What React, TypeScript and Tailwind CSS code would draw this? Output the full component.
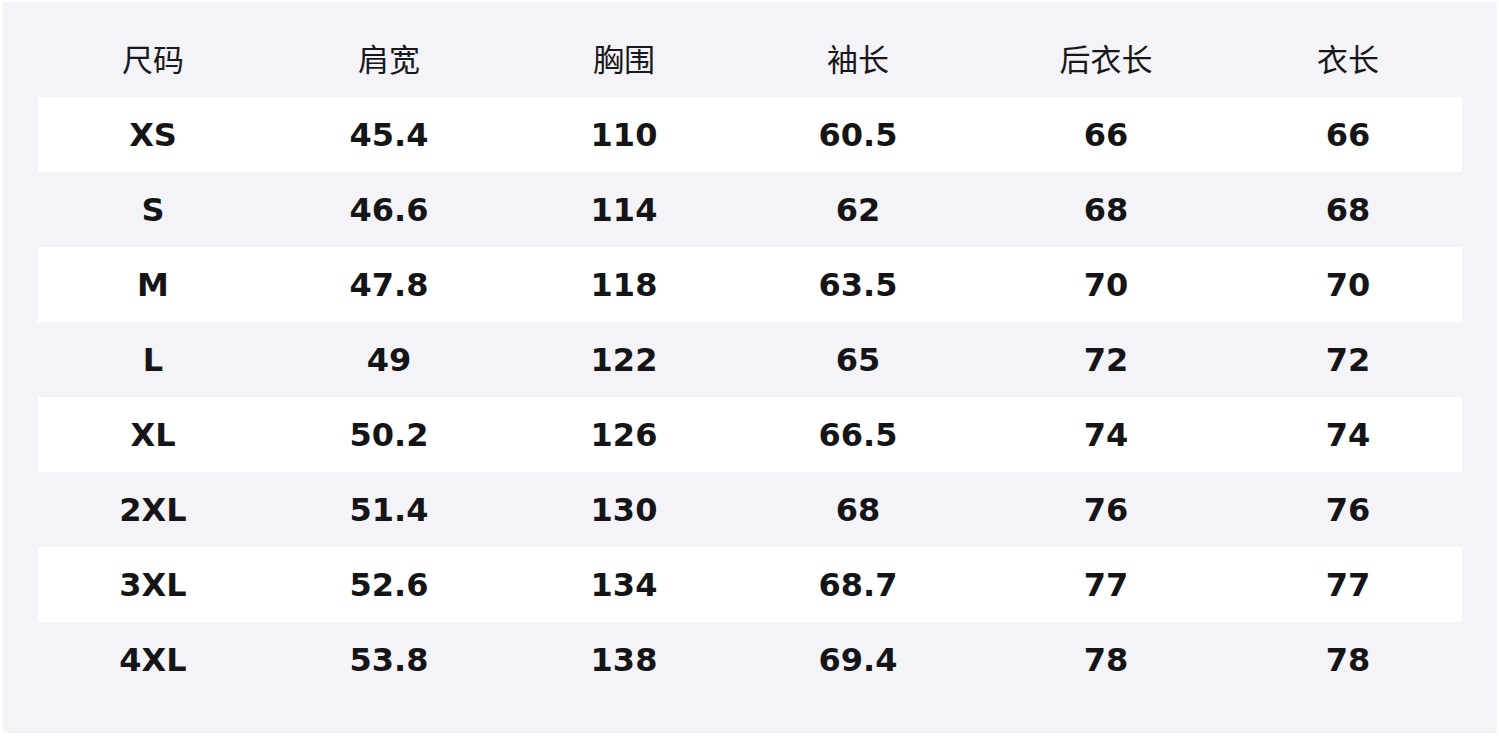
import React from "react";

const headers = ["尺码", "肩宽", "胸围", "袖长", "后衣长", "衣长"];
const rows = [
  ["XS", "45.4", "110", "60.5", "66", "66"],
  ["S", "46.6", "114", "62", "68", "68"],
  ["M", "47.8", "118", "63.5", "70", "70"],
  ["L", "49", "122", "65", "72", "72"],
  ["XL", "50.2", "126", "66.5", "74", "74"],
  ["2XL", "51.4", "130", "68", "76", "76"],
  ["3XL", "52.6", "134", "68.7", "77", "77"],
  ["4XL", "53.8", "138", "69.4", "78", "78"],
];

const cols = "grid grid-cols-[230px_242px_228px_240px_256px_228px]";

export default function App() {
  return (
    <div className="w-[1500px] h-[736px] bg-white pt-[2px] px-[3px]">
      <div className="w-[1494px] h-[731px] bg-[#f3f3f8] rounded-[3px] pt-[20px] px-[35px]">
        <div className={`${cols} h-[75px] items-center pb-[4px] text-[#18181a] text-[31px] font-normal [font-family:'Noto_Sans_CJK_SC',sans-serif]`}>
          {headers.map((h) => (
            <div key={h} className="text-center leading-none">{h}</div>
          ))}
        </div>
        {rows.map((r, i) => (
          <div
            key={r[0]}
            className={`${cols} h-[75px] items-center ${i % 2 === 0 ? "bg-white" : "bg-transparent"} text-[#151517] text-[32px] font-bold [font-family:'DejaVu_Sans',sans-serif]`}
          >
            {r.map((c, j) => (
              <div key={j} className="text-center leading-none">{c}</div>
            ))}
          </div>
        ))}
      </div>
    </div>
  );
}
